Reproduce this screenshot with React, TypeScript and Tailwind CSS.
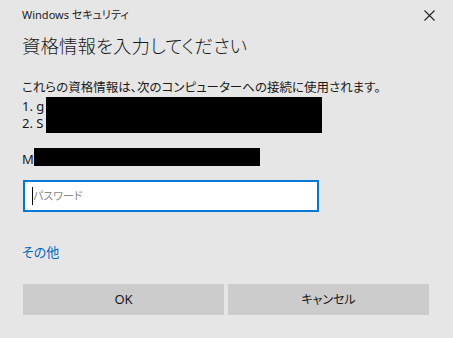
import React from "react";

export default function App() {
  return (
    <div
      className="w-[453px] h-[338px] bg-[#e6e6e6] flex flex-col pl-[22px] pr-[22px] text-[#1a1a1a] overflow-hidden [font-feature-settings:'palt']"
      style={{ fontFamily: '"Noto Sans", "Noto Sans CJK JP", sans-serif' }}
    >
      <div className="flex items-center justify-between h-[16px] mt-[7px]">
        <span className="text-[11px] leading-[16px] text-[#222]">Windows セキュリティ</span>
        <svg width="11" height="11" viewBox="0 0 11 11" className="-mr-[4px]">
          <path d="M0.5 0.5 L10.5 10.5 M10.5 0.5 L0.5 10.5" stroke="#222" strokeWidth="1.1" />
        </svg>
      </div>
      <div className="mt-[11px] text-[18.5px] leading-[24px] font-light text-[#1a1a1a]">資格情報を入力してください</div>
      <div className="mt-[21px] text-[12.5px] leading-[17px]">これらの資格情報は、次のコンピューターへの接続に使用されます。</div>
      <div className="flex mt-[1px] h-[36px]">
        <div className="w-[24px] flex flex-col pt-[1px] text-[13px] leading-[17px]">
          <span>1. g</span>
          <span>2. S</span>
        </div>
        <div className="w-[276px] h-[36px] bg-black" />
      </div>
      <div className="flex items-end mt-[15px] h-[18px]">
        <span className="w-[12px] text-[13px] leading-[14px]">M</span>
        <div className="w-[226px] h-[18px] bg-black" />
      </div>
      <div className="ml-[1px] mt-[14px] w-[296px] h-[32px] border-2 border-[#0078d7] bg-white flex items-center pl-[8px]">
        <span className="w-[1px] h-[18px] bg-black -ml-[1px]" />
        <span className="text-[11px] text-[#8a8a8a]">パスワード</span>
      </div>
      <div className="mt-[32px] text-[13px] leading-[16px] text-[#0067c0]">その他</div>
      <div className="flex gap-[4px] ml-[1px] mt-[24px]">
        <div className="w-[201px] h-[31px] bg-[#cccccc] flex items-center justify-center text-[13px]">OK</div>
        <div className="w-[201px] h-[31px] bg-[#cccccc] flex items-center justify-center text-[12px]">キャンセル</div>
      </div>
    </div>
  );
}
